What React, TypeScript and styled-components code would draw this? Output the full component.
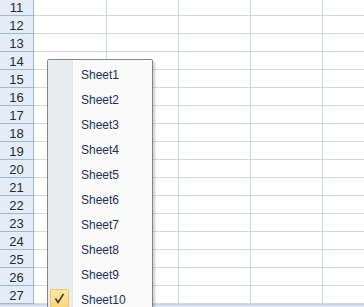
import React from "react";
import styled, { createGlobalStyle } from "styled-components";

const Global = createGlobalStyle`
  html, body { margin: 0; padding: 0; background: #ffffff; }
  body { font-family: "Liberation Sans", Arial, sans-serif; }
`;

const Viewport = styled.div`
  position: relative;
  width: 364px;
  height: 307px;
  overflow: hidden;
  background: #ffffff;
`;

const Sheet = styled.div`
  display: flex;
  flex-direction: column;
  margin-top: -2px;
`;

const Row = styled.div`
  display: grid;
  grid-template-columns: 34px 73px 72px 72px 72px 72px;
  height: 18px;
`;

const RowHeader = styled.div`
  box-sizing: border-box;
  background: #e4ecf7;
  border-right: 1px solid #9eb6ce;
  border-bottom: 1px solid #9eb6ce;
  display: flex;
  align-items: center;
  justify-content: center;
  font-size: 13px;
  color: #2a2a2a;
  padding-top: 1px;
`;

const Cell = styled.div`
  box-sizing: border-box;
  border-right: 1px solid #d0d7e5;
  border-bottom: 1px solid #d0d7e5;
`;

const BottomStrip = styled.div`
  height: 6px;
  background: #dbe5f1;
  border-top: 1px solid #c5d4e6;
`;

const Menu = styled.div`
  position: absolute;
  left: 47px;
  top: 59px;
  width: 104px;
  display: flex;
  flex-direction: column;
  padding: 2px 0;
  background: #fafafa;
  border: 1px solid #868686;
  border-radius: 2px 2px 0 0;
  box-shadow: 2px 2px 2px rgba(0, 0, 0, 0.18);
`;

const Gutter = styled.div`
  position: absolute;
  left: 0;
  top: 0;
  bottom: 0;
  width: 24px;
  background: #e9ecee;
  border-right: 1px solid #e2e3e3;
  box-shadow: 1px 0 0 #ffffff;
`;

const Item = styled.div`
  position: relative;
  height: 25px;
  display: flex;
  align-items: center;
  padding-left: 33px;
  font-size: 12px;
  color: #1e2f56;
`;

const Check = styled.div`
  position: absolute;
  left: 2px;
  top: 2px;
  width: 19px;
  height: 19px;
  box-sizing: border-box;
  border: 1px solid #f2c468;
  border-radius: 2px;
  background: linear-gradient(#fde8a6, #fbd77c);
  display: flex;
  align-items: center;
  justify-content: center;
`;

const rows = Array.from({ length: 17 }, (_, i) => 11 + i);
const sheets = Array.from({ length: 10 }, (_, i) => `Sheet${i + 1}`);

export default function App() {
  return (
    <Viewport>
      <Global />
      <Sheet>
        {rows.map((r) => (
          <Row key={r}>
            <RowHeader>{r}</RowHeader>
            <Cell />
            <Cell />
            <Cell />
            <Cell />
            <Cell />
          </Row>
        ))}
        <BottomStrip />
      </Sheet>
      <Menu>
        <Gutter />
        {sheets.map((s, i) => (
          <Item key={s}>
            {i === sheets.length - 1 && (
              <Check>
                <svg width="11" height="11" viewBox="0 0 11 11">
                  <path d="M1.5 5.5 L4 9.5 L9.5 1" fill="none" stroke="#3a3a3a" strokeWidth="1.5" />
                </svg>
              </Check>
            )}
            {s}
          </Item>
        ))}
      </Menu>
    </Viewport>
  );
}
